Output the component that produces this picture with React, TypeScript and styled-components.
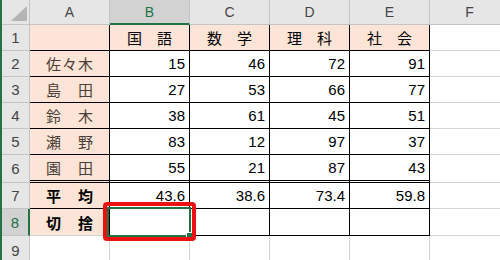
import React from "react";
import styled, { createGlobalStyle } from "styled-components";

type Line = "grid" | "black" | "double";

const GREEN = "#217346";
const ORANGE = "#fce4d6";
const GRID = "#d4d4d4";
const HEAD_LINE = "#c4c4c4";

const lineCss = (l: Line = "grid") =>
  l === "black"
    ? "1px solid #000"
    : l === "double"
    ? "3px double #000"
    : `1px solid ${GRID}`;

const subjects = ["国語", "数学", "理科", "社会"];

const rows = [
  { name: "佐々木", values: ["15", "46", "72", "91"] },
  { name: "島田", values: ["27", "53", "66", "77"] },
  { name: "鈴木", values: ["38", "61", "45", "51"] },
  { name: "瀬野", values: ["83", "12", "97", "37"] },
  { name: "園田", values: ["55", "21", "87", "43"] },
  { name: "平均", values: ["43.6", "38.6", "73.4", "59.8"], bold: true },
  { name: "切捨", values: ["", "", "", ""], bold: true },
];

const App = () => {
  return (
    <>
      <GlobalStyle />
      <Sheet>
        <Row $h={25}>
          <Corner>
            <svg width="28" height="24" viewBox="0 0 28 24">
              <polygon points="25,6 25,21 9,21" fill="#b4b4b4" />
            </svg>
          </Corner>
          {["A", "B", "C", "D", "E", "F"].map((c) => (
            <ColHead key={c} $active={c === "B"}>
              {c}
            </ColHead>
          ))}
        </Row>

        <Row $h={26}>
          <RowHead>1</RowHead>
          <Cell $bg={ORANGE} $right="black" $bottom="black" />
          {subjects.map((s) => (
            <Cell key={s} $bg={ORANGE} $right="black" $bottom="black" $spread={17}>
              {s.split("").map((ch, i) => (
                <span key={i}>{ch}</span>
              ))}
            </Cell>
          ))}
          <Cell />
        </Row>

        {rows.map((r, i) => {
          const n = i + 2;
          const bottom: Line = n === 6 ? "double" : "black";
          return (
            <Row key={n} $h={n === 6 ? 28 : n === 8 ? 27 : 26}>
              <RowHead $active={n === 8}>{n}</RowHead>
              <Cell
                $bg={ORANGE}
                $right="black"
                $bottom={n === 8 ? "grid" : bottom}
                $spread={16}
                $bold={r.bold}
                $name
              >
                {r.name.split("").map((ch, k) => (
                  <span key={k}>{ch}</span>
                ))}
              </Cell>
              {r.values.map((v, k) => (
                <Cell key={k} $right="black" $bottom={bottom}>
                  {v}
                  {n === 8 && k === 0 && (
                    <>
                      <Selection>
                        <FillHandle />
                      </Selection>
                      <Callout />
                    </>
                  )}
                </Cell>
              ))}
              <Cell />
            </Row>
          );
        })}

        <Row $h={30}>
          <RowHead>9</RowHead>
          {[0, 1, 2, 3, 4, 5].map((k) => (
            <Cell key={k} />
          ))}
        </Row>
      </Sheet>
    </>
  );
};

const GlobalStyle = createGlobalStyle`
  html, body {
    margin: 0;
    padding: 0;
    background: #fff;
  }
  body {
    width: 500px;
    height: 260px;
    overflow: hidden;
  }
`;

const Sheet = styled.div`
  border-left: 2px solid ${GREEN};
  width: 510px;
  font-family: "Liberation Sans", "Noto Sans CJK JP", sans-serif;
`;

const Row = styled.div<{ $h: number }>`
  display: grid;
  grid-template-columns: 28px repeat(6, 80px);
  height: ${(p) => p.$h}px;
`;

const Corner = styled.div`
  box-sizing: border-box;
  background: #e6e6e6;
  border-right: 1px solid ${HEAD_LINE};
  border-bottom: 1px solid ${HEAD_LINE};
  svg {
    display: block;
  }
`;

const ColHead = styled.div<{ $active?: boolean }>`
  box-sizing: border-box;
  display: flex;
  align-items: center;
  justify-content: center;
  background: ${(p) => (p.$active ? "#d2d2d2" : "#e6e6e6")};
  color: ${(p) => (p.$active ? GREEN : "#444")};
  border-right: 1px solid ${HEAD_LINE};
  border-bottom: ${(p) => (p.$active ? `2px solid ${GREEN}` : `1px solid ${HEAD_LINE}`)};
  font-size: 14px;
`;

const RowHead = styled.div<{ $active?: boolean }>`
  box-sizing: border-box;
  display: flex;
  align-items: center;
  justify-content: center;
  background: ${(p) => (p.$active ? "#d2d2d2" : "#e6e6e6")};
  color: ${(p) => (p.$active ? GREEN : "#444")};
  border-right: ${(p) => (p.$active ? `2px solid ${GREEN}` : `1px solid ${HEAD_LINE}`)};
  border-bottom: 1px solid ${HEAD_LINE};
  font-size: 15px;
`;

const Cell = styled.div<{
  $bg?: string;
  $right?: Line;
  $bottom?: Line;
  $spread?: number;
  $bold?: boolean;
  $name?: boolean;
}>`
  position: relative;
  box-sizing: border-box;
  display: flex;
  align-items: center;
  justify-content: ${(p) => (p.$spread ? "space-between" : "flex-end")};
  padding: 0 ${(p) => (p.$spread ? `${p.$spread}px` : "4px")};
  background: ${(p) => p.$bg ?? "#fff"};
  border-right: ${(p) => lineCss(p.$right)};
  border-bottom: ${(p) => lineCss(p.$bottom)};
  color: ${(p) => (p.$name && !p.$bold ? "#4a3e38" : "#000")};
  font-size: 15px;
  font-weight: ${(p) => (p.$bold ? 700 : 400)};
`;

const Selection = styled.div`
  position: absolute;
  z-index: 2;
  top: -2px;
  left: -3px;
  right: -2px;
  bottom: -2px;
  border: 2px solid ${GREEN};
`;

const FillHandle = styled.div`
  position: absolute;
  right: -4px;
  bottom: -4px;
  width: 5px;
  height: 5px;
  background: ${GREEN};
  border: 1px solid #fff;
`;

const Callout = styled.div`
  position: absolute;
  z-index: 3;
  top: -7px;
  left: -7px;
  right: -7px;
  bottom: -6px;
  border: 4px solid #ee1111;
  border-radius: 4px;
  pointer-events: none;
`;

export default App;
